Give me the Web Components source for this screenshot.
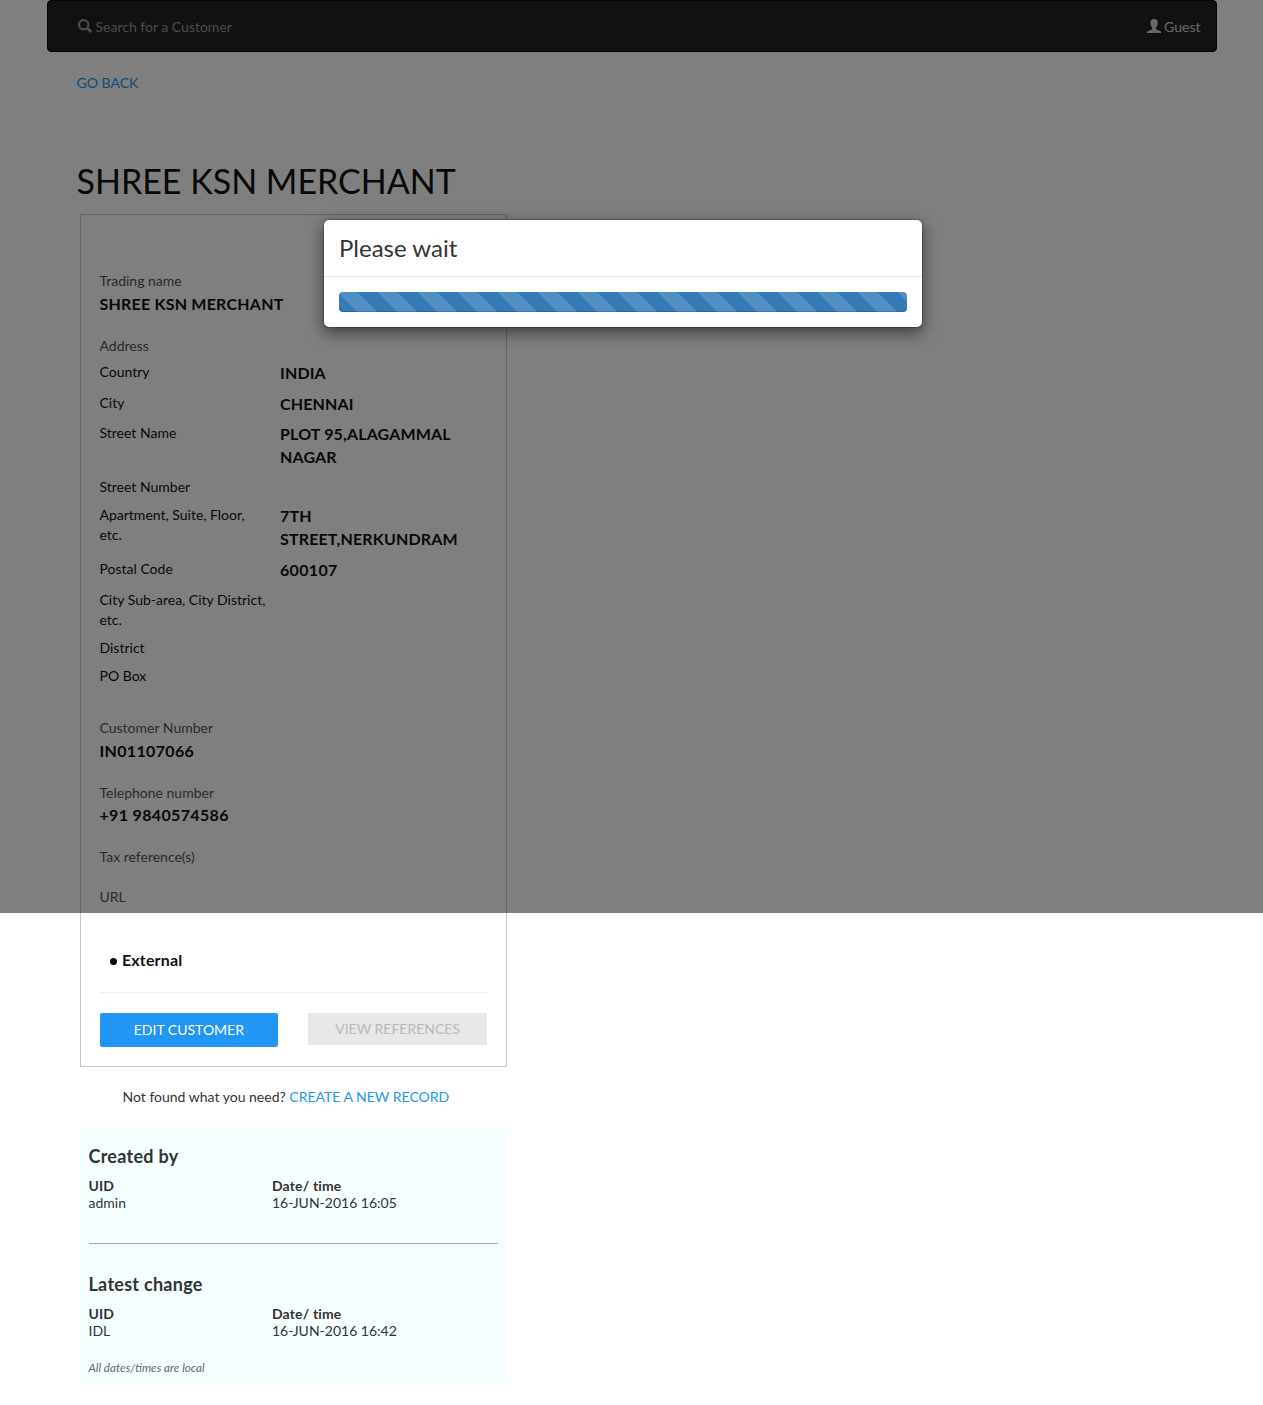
<!DOCTYPE html>
<html lang="en"><head><meta charset="utf-8"><title>Customer details</title>
<style>
html,body{margin:0;padding:0}
body{font:14px/20px Lato,"Liberation Sans",sans-serif;color:#333;background:#fff;height:1405px;position:relative;overflow:hidden}
</style></head><body>
<customer-page></customer-page>
<wait-dialog heading="Please wait"></wait-dialog>
<script>
const define=(name,html,setup)=>customElements.define(name,class extends HTMLElement{
  connectedCallback(){
    if(this.shadowRoot)return;
    const root=this.attachShadow({mode:'open'});
    const t=document.createElement('template');
    t.innerHTML='<style>*{box-sizing:border-box}:host{display:block;box-sizing:border-box}a{color:#2196f3;text-decoration:none}</style>'+html;
    root.append(t.content.cloneNode(true));
    if(setup)setup(this,root);
  }
});
const fill=(...names)=>(host,root)=>names.forEach(n=>{
  const el=root.querySelector('.'+n),v=host.getAttribute(n);
  if(v)el.textContent=v;else el.remove();
});

define('nav-bar',`<style>
:host{height:52px;background:#222;border:1px solid #080808;border-radius:4px;color:#fff}
nav{display:flex;justify-content:space-between;align-items:center;height:50px;padding:1px 15px 0 30px}
span{display:flex;align-items:center;gap:4px}
.find{color:#999}.user{color:#fff;opacity:.8;gap:3.500px}
svg{display:block;width:14px;height:14px;fill:currentColor;margin-bottom:2px}
</style><nav><span class="find"><svg viewBox="0 0 14 14"><path fill-rule="evenodd" d="M5.700 0a5.700 5.700 0 1 0 2.900 10.600l3 3c.4.400.8.400 1.200 0l.8-.8c.4-.4.4-.8 0-1.200l-3-3A5.700 5.700 0 0 0 5.700 0zm0 2.100a3.600 3.600 0 1 1 0 7.200 3.600 3.600 0 0 1 0-7.200z"/></svg>Search for a Customer</span>
<span class="user"><svg viewBox="0 0 14 14"><path d="M7.100 0C4.800 0 3.500 1.300 3.500 3.700c0 2.200.6 3.800 1.800 5v1.200c0 .4-.3.600-.8.800L1 12c-.6.300-1 .7-1 1.200V14h14v-.8c0-.5-.4-.9-1-1.200l-3.300-1.300c-.5-.2-.8-.4-.8-.8V8.700c1.200-1.200 1.800-2.800 1.800-5C10.700 1.300 9.400 0 7.100 0z"/></svg>Guest</span></nav>`);

define('labelled-value',`<style>
:host{padding-bottom:20px;color:#555}
.label{display:block;height:20px}
.value{display:block;height:24.600px;padding-top:1.900px;font-size:16px;line-height:22.857px;font-weight:700;color:#111;letter-spacing:.22px}
:host([numeric]) .value{letter-spacing:.34px}
</style><span class="label"></span><span class="value"></span>`,fill('label','value'));

define('address-row',`<style>
:host{display:flex;padding:4px 0;color:#111}
.label{width:180.500px;padding-right:10px;flex:none}
.value{width:190px;font-size:16px;line-height:22.857px;font-weight:700;color:#111;letter-spacing:.16px}
:host([numeric]) .value{letter-spacing:.34px}
</style><span class="label"></span><span class="value"></span>`,fill('label','value'));

define('action-button',`<style>
:host{flex:1;height:34px;line-height:34px;text-align:center;background:#2196f3;color:#fff;border-radius:2px}
:host([disabled]){height:32px;line-height:32px;background:#e8e8e8;color:#b9b9b9;border-radius:0}
</style><slot></slot>`);

define('customer-card',`<style>
:host{width:427px;height:853px;margin-left:33.500px;border:1px solid #c8c8c8;padding:56px 19px 0 18.500px}
.address{padding-bottom:28.250px}
.address>labelled-value{padding:0 0 2.100px}
.source{display:flex;align-items:center;gap:5.500px;margin-top:22.150px;padding-left:10px;font-size:16px;line-height:22px;font-weight:700;color:#111;letter-spacing:.16px}
.source i{width:7px;height:7px;border-radius:50%;background:#000;margin-top:3px}
hr{border:0;border-top:1px solid #eee;margin:21px 0 20px}
.actions{display:flex;gap:30px}
</style>
<labelled-value label="Trading name" value="SHREE KSN MERCHANT"></labelled-value>
<div class="address"><labelled-value label="Address"></labelled-value>
<address-row label="Country" value="INDIA"></address-row>
<address-row label="City" value="CHENNAI"></address-row>
<address-row label="Street Name" value="PLOT 95,ALAGAMMAL NAGAR"></address-row>
<address-row label="Street Number"></address-row>
<address-row label="Apartment, Suite, Floor, etc." value="7TH STREET,NERKUNDRAM"></address-row>
<address-row numeric label="Postal Code" value="600107"></address-row>
<address-row label="City Sub-area, City District, etc."></address-row>
<address-row label="District"></address-row>
<address-row label="PO Box"></address-row></div>
<labelled-value numeric label="Customer Number" value="IN01107066"></labelled-value>
<labelled-value numeric label="Telephone number" value="+91 9840574586"></labelled-value>
<labelled-value label="Tax reference(s)"></labelled-value>
<labelled-value label="URL"></labelled-value>
<div class="source"><i></i>External</div><hr>
<div class="actions"><action-button>EDIT CUSTOMER</action-button><action-button disabled>VIEW REFERENCES</action-button></div>`);

define('audit-entry',`<style>
h4{margin:0 0 11px;font-size:18px;line-height:20px;font-weight:700;letter-spacing:.27px}
.cols{display:grid;grid-template-columns:183.500px 1fr;line-height:17px}
b,span{display:block}
b{letter-spacing:.15px}
</style><h4 class="heading"></h4><div class="cols"><div><b>UID</b><span class="uid"></span></div><div><b>Date/ time</b><span class="time"></span></div></div>`,fill('heading','uid','time'));

define('audit-panel',`<style>
:host{width:427px;height:258px;margin:20px 0 0 33.500px;padding:19px 9px 0 8.500px;background:#f5ffff}
hr{border:0;border-top:1px solid #aaa;margin:32px 0 30px}
em{display:block;margin-top:18px;font-size:11.700px;color:#666}
</style><audit-entry heading="Created by" uid="admin" time="16-JUN-2016 16:05"></audit-entry><hr>
<audit-entry heading="Latest change" uid="IDL" time="16-JUN-2016 16:42"></audit-entry><em>All dates/times are local</em>`);

define('customer-page',`<style>
:host{width:1170px;margin:0 auto}
.back{display:block;margin:21px 0 0 30px}
h1{margin:69px 0 15px 30px;font-size:34px;line-height:37px;font-weight:400;color:#111}
p{margin:20px 0 0 76px}
</style><nav-bar></nav-bar><a class="back">GO BACK</a><h1>SHREE KSN MERCHANT</h1>
<customer-card></customer-card><p>Not found what you need? <a>CREATE A NEW RECORD</a></p><audit-panel></audit-panel>`);

define('wait-dialog',`<style>
:host{position:absolute;top:0;left:0;width:100%;height:913px;background:rgba(0,0,0,.5);padding-top:219px}
.box{width:600px;margin-left:323px;background:#fff;background-clip:padding-box;border:1px solid rgba(0,0,0,.2);border-radius:6px;box-shadow:0 5px 15px rgba(0,0,0,.5)}
header{height:57px;padding:15px;border-bottom:1px solid #e5e5e5;font-size:24px;line-height:25px}
.body{padding:15px}
.bar{height:20px;border-radius:4px;background:linear-gradient(45deg,rgba(255,255,255,.15) 25%,transparent 25%,transparent 50%,rgba(255,255,255,.15) 50%,rgba(255,255,255,.15) 75%,transparent 75%) -1px 0/40px 40px #337ab7;box-shadow:inset 0 -1px 0 rgba(0,0,0,.15)}
</style><div class="box"><header class="heading"></header><div class="body"><div class="bar"></div></div></div>`,fill('heading'));
</script></body></html>
